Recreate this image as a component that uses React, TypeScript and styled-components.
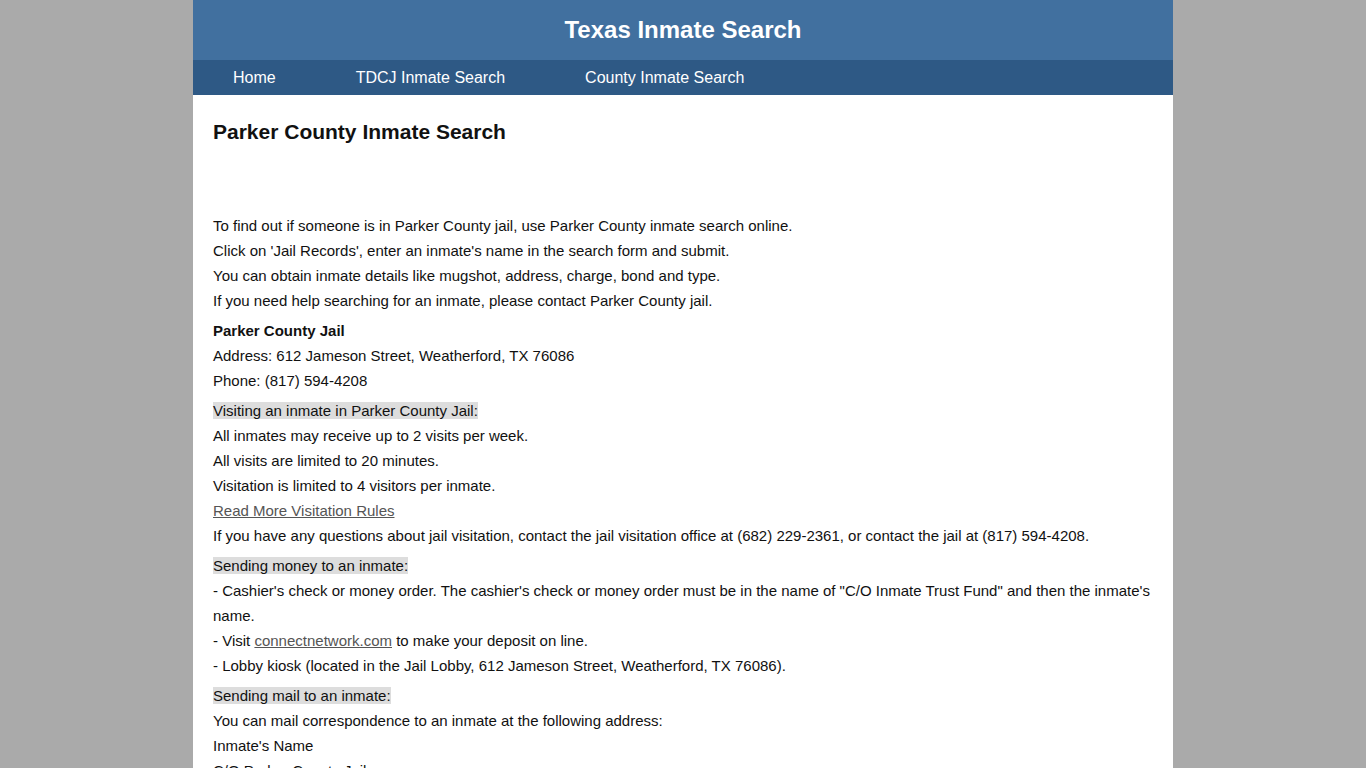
import React from "react";
import styled, { createGlobalStyle } from "styled-components";

const Global = createGlobalStyle`
  html, body { margin: 0; padding: 0; }
  body {
    background: #aaaaaa;
    font-family: "Liberation Sans", Arial, sans-serif;
    color: #111111;
  }
`;

const Page = styled.div`
  width: 980px;
  margin: 0 auto;
  background: #ffffff;
  min-height: 768px;
`;

const Header = styled.header`
  height: 60px;
  background: #41709f;
  display: flex;
  align-items: center;
  justify-content: center;
`;

const SiteTitle = styled.div`
  color: #ffffff;
  font-size: 24px;
  font-weight: bold;
`;

const Nav = styled.nav`
  height: 35px;
  background: #2e5985;
  display: flex;
  align-items: center;
`;

const NavLink = styled.a`
  color: #ffffff;
  font-size: 16px;
  text-decoration: none;
  padding: 0 40px;
  line-height: 35px;
`;

const Content = styled.main`
  padding: 25px 20px 20px;
`;

const Title = styled.h1`
  margin: 0 0 69px;
  font-size: 21px;
  line-height: 24px;
  font-weight: bold;
  color: #111111;
`;

const Para = styled.p`
  margin: 0 0 5px;
  font-size: 15px;
  line-height: 25px;
`;

const Strong = styled.strong`
  font-weight: bold;
`;

const Mark = styled.span`
  background: #dddddd;
`;

const TextLink = styled.a`
  color: #555555;
  text-decoration: underline;
`;

export default function App() {
  return (
    <>
      <Global />
      <Page>
        <Header>
          <SiteTitle>Texas Inmate Search</SiteTitle>
        </Header>
        <Nav>
          <NavLink href="#">Home</NavLink>
          <NavLink href="#">TDCJ Inmate Search</NavLink>
          <NavLink href="#">County Inmate Search</NavLink>
        </Nav>
        <Content>
          <Title>Parker County Inmate Search</Title>
          <Para>
            To find out if someone is in Parker County jail, use Parker County inmate search online.
            <br />
            Click on 'Jail Records', enter an inmate's name in the search form and submit.
            <br />
            You can obtain inmate details like mugshot, address, charge, bond and type.
            <br />
            If you need help searching for an inmate, please contact Parker County jail.
          </Para>
          <Para>
            <Strong>Parker County Jail</Strong>
            <br />
            Address: 612 Jameson Street, Weatherford, TX 76086
            <br />
            Phone: (817) 594-4208
          </Para>
          <Para>
            <Mark>Visiting an inmate in Parker County Jail:</Mark>
            <br />
            All inmates may receive up to 2 visits per week.
            <br />
            All visits are limited to 20 minutes.
            <br />
            Visitation is limited to 4 visitors per inmate.
            <br />
            <TextLink href="#">Read More Visitation Rules</TextLink>
            <br />
            If you have any questions about jail visitation, contact the jail visitation office at (682) 229-2361, or contact the jail at (817) 594-4208.
          </Para>
          <Para>
            <Mark>Sending money to an inmate:</Mark>
            <br />
            - Cashier's check or money order. The cashier's check or money order must be in the name of "C/O Inmate Trust Fund" and then the inmate's name.
            <br />
            - Visit <TextLink href="#">connectnetwork.com</TextLink> to make your deposit on line.
            <br />
            - Lobby kiosk (located in the Jail Lobby, 612 Jameson Street, Weatherford, TX 76086).
          </Para>
          <Para>
            <Mark>Sending mail to an inmate:</Mark>
            <br />
            You can mail correspondence to an inmate at the following address:
            <br />
            Inmate's Name
            <br />
            C/O Parker County Jail
            <br />
            612 Jameson Street
            <br />
            Weatherford, TX 76086
          </Para>
        </Content>
      </Page>
    </>
  );
}
